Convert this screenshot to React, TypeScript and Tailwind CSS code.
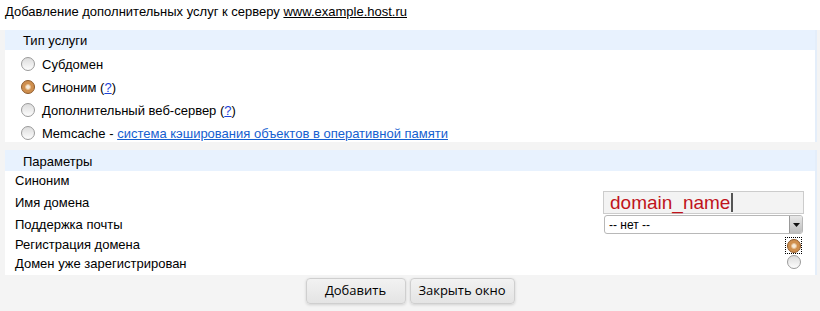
import React from 'react';

const Radio = ({ checked = false, focused = false }: { checked?: boolean; focused?: boolean }) => (
  <span
    className={`inline-flex items-center justify-center w-[17px] h-[17px] shrink-0 ${
      focused ? 'outline-1 outline-dotted outline-black -outline-offset-1' : ''
    }`}
  >
    {checked ? (
      <span className="w-[14px] h-[14px] rounded-full bg-[#cf8f4e] border border-[#8e5a2b] flex items-center justify-center">
        <span className="w-[6px] h-[6px] rounded-full bg-[#f6ead9] border border-[#e6bd8f]" />
      </span>
    ) : (
      <span className="w-[14px] h-[14px] rounded-full border border-[#9a9a9a] bg-gradient-to-b from-[#dcdcdc] to-[#fdfdfd]" />
    )}
  </span>
);

const Help = () => (
  <span>
    {' '}(<a className="text-[#1b3fd6] underline">?</a>)
  </span>
);

export default function App() {
  return (
    <div className="w-[820px] h-[311px] bg-[#f4f4f4] font-['Liberation_Sans',Arial,sans-serif] text-[13px] text-black overflow-hidden">
      <div className="h-[30px] bg-white pl-[5px] pt-[4px] leading-[16px]">
        Добавление дополнительных услуг к серверу <span className="underline">www.example.host.ru</span>
      </div>

      <div className="ml-[5px] w-[812px] border-r-[2px] border-[#e4eefa]">
        <div className="h-[20px] bg-[#e8f2fe] pl-[18px] leading-[22px]">Тип услуги</div>
        <div className="bg-white h-[92px] pt-[2px]">
          {[
            { label: <>Субдомен</> },
            { label: <>Синоним<Help /></>, checked: true },
            { label: <>Дополнительный веб-сервер<Help /></> },
            {
              label: (
                <>
                  Memcache -{' '}
                  <a className="text-[#1560d0] underline">система кэширования объектов в оперативной памяти</a>
                </>
              ),
            },
          ].map((r, i) => (
            <div key={i} className="h-[23px] flex items-center pl-[14px] gap-[6px]">
              <Radio checked={r.checked} />
              <span className="leading-[16px] pt-[2px]">{r.label}</span>
            </div>
          ))}
        </div>
      </div>

      <div className="ml-[5px] mt-[8px] w-[812px] border-r-[2px] border-[#e4eefa]">
        <div className="h-[21px] bg-[#e8f2fe] pl-[18px] leading-[24px] overflow-hidden">Параметры</div>
        <div className="bg-white h-[104px] pl-[10px] pr-[11px]">
          <div className="h-[20px] flex items-center">Синоним</div>
          <div className="h-[23px] flex items-center justify-between">
            <span>Имя домена</span>
            <div className="w-[201px] h-[23px] bg-[#f3f3f3] border border-[#cccccc] pl-[6px] flex items-center text-[19px] text-[#c0141c] leading-none">
              domain_name
              <span className="w-[2px] h-[19px] bg-[#555] ml-[1px]" />
            </div>
          </div>
          <div className="h-[21px] flex items-center justify-between">
            <span>Поддержка почты</span>
            <div className="w-[199px] h-[19px] mr-[1px] border border-[#b8b8b8] rounded-[3px] bg-white flex items-center text-[12px] pl-[4px] overflow-hidden">
              <span className="flex-1">-- нет --</span>
              <span className="w-[13px] h-[17px] bg-gradient-to-b from-[#e8e8e8] to-[#bdbdbd] border-l border-[#999] flex items-center justify-center">
                <svg width="7" height="4" viewBox="0 0 7 4"><path d="M0 0h7L3.5 4z" fill="#111" /></svg>
              </span>
            </div>
          </div>
          <div className="h-[19px] flex items-center justify-between">
            <span>Регистрация домена</span>
            <span className="mr-[2px]"><Radio checked focused /></span>
          </div>
          <div className="h-[20px] flex items-center justify-between">
            <span>Домен уже зарегистрирован</span>
            <span className="mr-[2px]"><Radio /></span>
          </div>
        </div>
      </div>

      <div className="flex justify-center gap-[4px] mt-[3px] font-['Open_Sans',sans-serif] text-[13px]">
        <button className="w-[100px] h-[26px] rounded-[4px] border border-[#cfcfcf] bg-gradient-to-b from-[#f2f2f2] to-[#e4e4e4] shadow-[0_1px_3px_rgba(0,0,0,0.15)]">
          Добавить
        </button>
        <button className="w-[105px] h-[26px] rounded-[4px] border border-[#cfcfcf] bg-gradient-to-b from-[#f2f2f2] to-[#e4e4e4] shadow-[0_1px_3px_rgba(0,0,0,0.15)]">
          Закрыть окно
        </button>
      </div>
    </div>
  );
}
